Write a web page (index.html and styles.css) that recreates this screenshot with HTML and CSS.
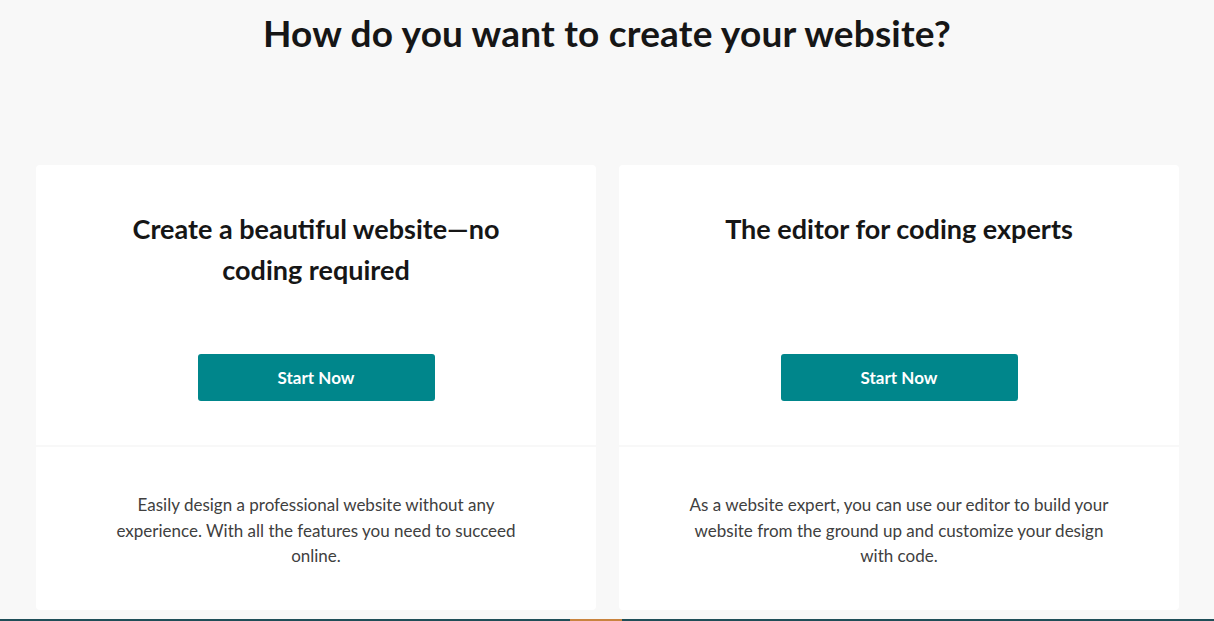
FILE: index.html
```html
<!DOCTYPE html>
<html lang="en">
<head>
<meta charset="utf-8">
<title>How do you want to create your website?</title>
<link rel="stylesheet" href="styles.css">
</head>
<body>
<main class="page">
  <h1 class="page-title">How do you want to create your website?</h1>
  <div class="cards">
    <section class="card">
      <div class="card-top">
        <h2 class="card-title">Create a beautiful website—no coding required</h2>
        <a class="btn" href="#">Start Now</a>
      </div>
      <div class="card-bottom">
        <p class="card-text">Easily design a professional website without any experience. With all the features you need to succeed online.</p>
      </div>
    </section>
    <section class="card">
      <div class="card-top">
        <h2 class="card-title">The editor for coding experts</h2>
        <a class="btn" href="#">Start Now</a>
      </div>
      <div class="card-bottom">
        <p class="card-text">As a website expert, you can use our editor to build your website from the ground up and customize your design with code.</p>
      </div>
    </section>
  </div>
</main>
<footer class="footer-bar">
  <span class="footer-accent"></span>
</footer>
</body>
</html>
```
FILE: styles.css
```css
* { box-sizing: border-box; }
html, body { margin: 0; padding: 0; }
body {
  background: #f8f8f8;
  font-family: "Lato", "Noto Sans", sans-serif;
  color: #161616;
  overflow: hidden;
}
.page {
  padding: 10px 36px 0 36px;
}
.page-title {
  margin: 0;
  text-align: center;
  font-size: 37px;
  line-height: 46px;
  font-weight: 700;
  color: #161616;
  letter-spacing: 0.2px;
}
.cards {
  margin-top: 109px;
  display: grid;
  grid-template-columns: 560px 560px;
  column-gap: 23px;
}
.card {
  background: #ffffff;
  border-radius: 4px;
  display: flex;
  flex-direction: column;
  height: 445px;
}
.card-top {
  height: 282px;
  padding: 43px 0 44px;
  display: flex;
  flex-direction: column;
  align-items: center;
  border-bottom: 2px solid #f8f8f8;
}
.card-title {
  margin: 0;
  width: 420px;
  text-align: center;
  font-size: 27px;
  line-height: 41px;
  font-weight: 700;
  color: #161616;
}
.btn {
  margin-top: auto;
  width: 237px;
  height: 47px;
  display: flex;
  align-items: center;
  justify-content: center;
  background: #00868b;
  color: #ffffff;
  border-radius: 3px;
  font-size: 17px;
  font-weight: 700;
  text-decoration: none;
}
.card-bottom {
  padding: 45px 0 0;
  display: flex;
  justify-content: center;
}
.card-text {
  margin: 0;
  width: 425px;
  text-align: center;
  font-size: 17px;
  line-height: 25.5px;
  color: #404040;
}
.footer-bar {
  margin-top: 9px;
  height: 2px;
  background: #1f4e58;
  padding-left: 570px;
}
.footer-accent {
  display: block;
  width: 52px;
  height: 2px;
  background: #c9843f;
}
```
